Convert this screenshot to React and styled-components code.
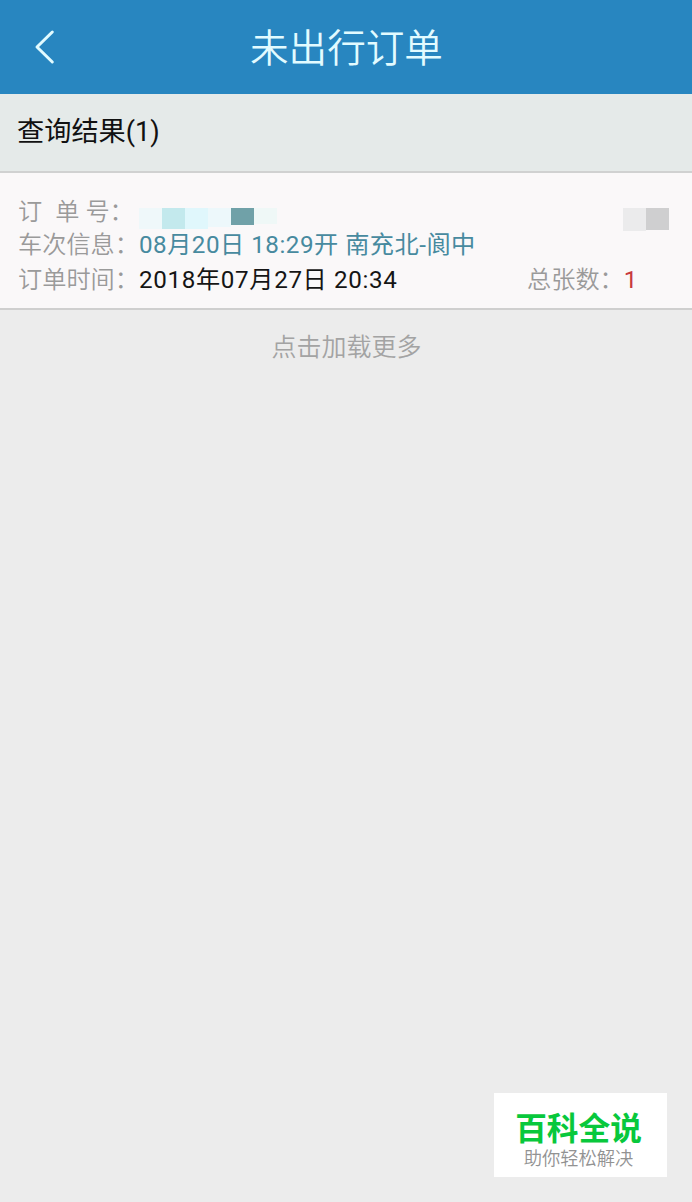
import React from "react";
import styled, { createGlobalStyle } from "styled-components";

const GlobalStyle = createGlobalStyle`
  * {
    box-sizing: border-box;
  }

  body {
    margin: 0;
    background: #ececec;
    font-family: Roboto, "Noto Sans CJK SC", sans-serif;
    font-weight: 350;
  }
`;

//censored parts of the order
const orderBlocks = [
  { color: "#eff8fa", height: 21 },
  { color: "#c3e9ed", height: 21 },
  { color: "#e0f7fc", height: 21 },
  { color: "#edf8fb", height: 19 },
  { color: "#70a1a8", height: 17 },
  { color: "#eff8f7", height: 16 },
];
const statusBlocks = [
  { color: "#ebebec", height: 23 },
  { color: "#cfcfd0", height: 22 },
];

function Mosaic({ blocks }) {
  return (
    <StyledMosaic>
      {blocks.map(({ color, height }, i) => (
        <Block key={i} $color={color} $height={height} />
      ))}
    </StyledMosaic>
  );
}

export default function App() {
  return (
    <>
      <GlobalStyle />
      <Page>
        <Header>
          <BackButton aria-label="返回">
            <svg width="22" height="36" viewBox="0 0 22 36" fill="none">
              <path
                d="M18.3 3 L3 18 L18.3 33"
                stroke="#e2fbff"
                strokeWidth="3"
                strokeLinecap="round"
                strokeLinejoin="round"
              />
            </svg>
          </BackButton>
          <Title>未出行订单</Title>
        </Header>
        <ResultBar>查询结果(1)</ResultBar>
        <OrderCard>
          <Row $height={33}>
            <OrderLabel>
              <span>订</span>
              <span>单</span>
              <span>号：</span>
            </OrderLabel>
            <Mosaic blocks={orderBlocks} />
            <Status>
              <Mosaic blocks={statusBlocks} />
            </Status>
          </Row>
          <Row $height={34}>
            <Label>车次信息：</Label>
            <Value $color="#478a9f" $spacing={0.5}>
              08月20日 18:29开 南充北-阆中
            </Value>
          </Row>
          <Row $height={35}>
            <Label>订单时间：</Label>
            <Value $color="#151515" $spacing={0.65}>
              2018年07月27日 20:34
            </Value>
            <Tickets>
              总张数：<Count>1</Count>
            </Tickets>
          </Row>
        </OrderCard>
        <LoadMore>点击加载更多</LoadMore>
      </Page>
      <Watermark>
        <Brand>百科全说</Brand>
        <Slogan>助你轻松解决</Slogan>
      </Watermark>
    </>
  );
}

const Page = styled.main`
  min-height: 100vh;
  background: #ececec;
`;

const Header = styled.header`
  display: grid;
  grid-template-columns: 90px 1fr 90px;
  align-items: center;
  height: 94px;
  background: #2886c0;
`;

const BackButton = styled.button`
  display: flex;
  padding: 0 0 0 34px;
  border: 0;
  background: none;
`;

const Title = styled.h1`
  margin: 0;
  padding: 3px 0 0 1px;
  color: #e2fbff;
  font-size: 38.6px;
  font-weight: 350;
  line-height: 91px;
  text-align: center;
`;

const ResultBar = styled.div`
  height: 77px;
  padding: 18px 17px 0;
  background: #e5eae9;
  color: #111;
  font-size: 27.2px;
  font-weight: 390;
  line-height: 40px;
`;

const OrderCard = styled.section`
  height: 139px;
  padding: 22px 23px 0 18px;
  border-top: 2px solid #d0d1d1;
  border-bottom: 2px solid #cfcfcf;
  background: #faf8f9;
`;

const Row = styled.div`
  display: flex;
  align-items: center;
  height: ${({ $height }) => $height}px;
  font-size: 24.2px;
  line-height: 34px;
  white-space: nowrap;
`;

const Label = styled.span`
  width: 121px;
  color: #9a9a9a;
`;

const OrderLabel = styled(Label)`
  display: flex;

  span:nth-child(2) {
    margin: 0 6px 0 13px;
  }
`;

const Value = styled.span`
  color: ${({ $color }) => $color};
  font-weight: 380;
  letter-spacing: ${({ $spacing }) => $spacing}px;
`;

const StyledMosaic = styled.div`
  display: flex;
  align-items: flex-start;
  height: 23px;
  margin-top: 16px;
`;

const Block = styled.div`
  width: 23px;
  height: ${({ $height }) => $height}px;
  background: ${({ $color }) => $color};
`;

const Status = styled.div`
  margin-left: auto;
`;

const Tickets = styled.span`
  width: 142px;
  margin-left: auto;
  color: #9a9a9a;
`;

const Count = styled.span`
  color: #c83a3f;
  font-weight: 400;
`;

const LoadMore = styled.div`
  padding: 20px 0 0 1px;
  color: #a3a3a3;
  font-size: 25px;
  line-height: 36px;
  text-align: center;
`;

const Watermark = styled.aside`
  position: fixed;
  right: 25px;
  bottom: 25px;
  width: 173px;
  height: 84px;
  padding: 17px 4px 0 0;
  background: #fff;
  text-align: center;
`;

const Brand = styled.div`
  color: #08c83c;
  font-size: 31.7px;
  font-weight: 700;
  line-height: 40px;
`;

const Slogan = styled.div`
  color: #929292;
  font-size: 18.3px;
  line-height: 18px;
`;
